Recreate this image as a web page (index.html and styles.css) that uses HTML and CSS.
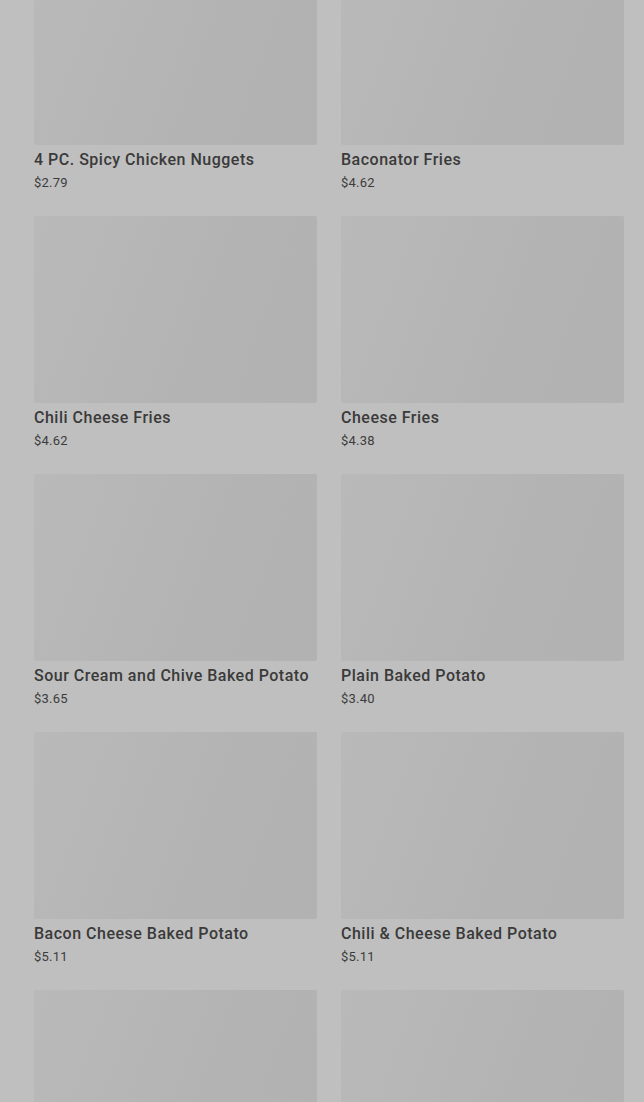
FILE: index.html
```html
<!DOCTYPE html>
<html lang="en">
<head>
    <meta charset="UTF-8">
    <meta name="viewport" content="width=device-width, initial-scale=1.0">
    <title>Menu</title>
    <link rel="stylesheet" href="styles.css">
</head>
<body>
    <div class="menu-grid">
        <div class="item">
            <div class="item-image"></div>
            <div class="item-name">4 PC. Spicy Chicken Nuggets</div>
            <div class="item-price">$2.79</div>
        </div>
        <div class="item">
            <div class="item-image"></div>
            <div class="item-name">Baconator Fries</div>
            <div class="item-price">$4.62</div>
        </div>
        <div class="item">
            <div class="item-image"></div>
            <div class="item-name">Chili Cheese Fries</div>
            <div class="item-price">$4.62</div>
        </div>
        <div class="item">
            <div class="item-image"></div>
            <div class="item-name">Cheese Fries</div>
            <div class="item-price">$4.38</div>
        </div>
        <div class="item">
            <div class="item-image"></div>
            <div class="item-name">Sour Cream and Chive Baked Potato</div>
            <div class="item-price">$3.65</div>
        </div>
        <div class="item">
            <div class="item-image"></div>
            <div class="item-name">Plain Baked Potato</div>
            <div class="item-price">$3.40</div>
        </div>
        <div class="item">
            <div class="item-image"></div>
            <div class="item-name">Bacon Cheese Baked Potato</div>
            <div class="item-price">$5.11</div>
        </div>
        <div class="item">
            <div class="item-image"></div>
            <div class="item-name">Chili &amp; Cheese Baked Potato</div>
            <div class="item-price">$5.11</div>
        </div>
        <div class="item">
            <div class="item-image"></div>
        </div>
        <div class="item">
            <div class="item-image"></div>
        </div>
    </div>
</body>
</html>
```

FILE: styles.css
```css
html, body {
    height: 100%;
    overflow: hidden;
}
body {
    font-family: Roboto, "Liberation Sans", sans-serif;
    margin: 0;
    padding: 0;
    background-color: #bfbfbf;
    color: #3a3a3a;
}
.menu-grid {
    display: grid;
    grid-template-columns: 283px 283px;
    column-gap: 24px;
    row-gap: 23px;
    padding: 0 20px 0 34px;
    margin-top: -42px;
}
.item-image {
    height: 187px;
    border-radius: 2px;
    background: linear-gradient(110deg, #b9b9b9 0%, #b6b6b6 35%, #b3b3b3 60%, #b2b2b2 100%);
}
.item-name {
    font-size: 16px;
    font-weight: 500;
    line-height: 20px;
    letter-spacing: 0.5px;
    margin-top: 5px;
    white-space: nowrap;
}
.item-price {
    font-size: 13px;
    line-height: 20px;
    letter-spacing: 0.2px;
    margin-top: 3px;
    color: #3c3c3c;
}
```
